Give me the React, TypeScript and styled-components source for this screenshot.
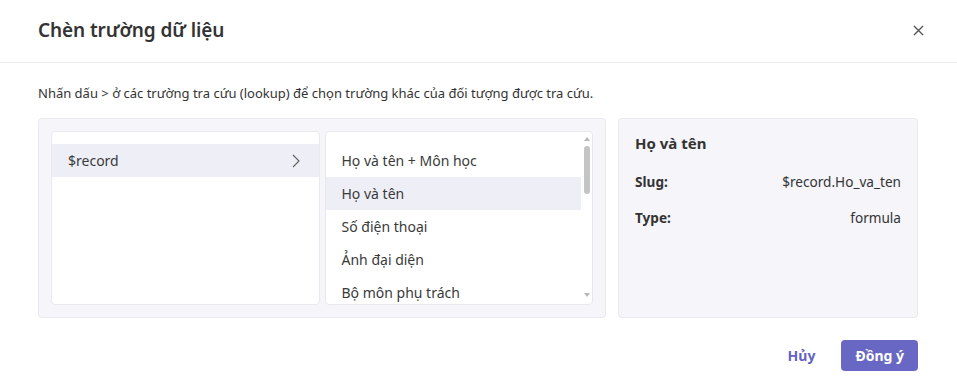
import React from "react";
import styled, { createGlobalStyle } from "styled-components";

const Global = createGlobalStyle`
  html, body { margin: 0; padding: 0; background: #fff; }
  body { font-family: "Noto Sans", "Open Sans", sans-serif; color: #333; }
  * { box-sizing: border-box; }
`;

const Dialog = styled.div`
  width: 957px;
  height: 391px;
  display: flex;
  flex-direction: column;
  background: #fff;
`;

const Header = styled.div`
  height: 63px;
  display: flex;
  align-items: center;
  justify-content: space-between;
  padding: 0 33px 2px 38px;
  border-bottom: 1px solid #ebebf0;
`;

const Title = styled.h2`
  margin: 0;
  font-size: 19px;
  font-weight: 600;
  color: #333;
  letter-spacing: -0.1px;
`;

const CloseButton = styled.button`
  width: 11px;
  height: 11px;
  padding: 0;
  border: none;
  background: none;
  display: flex;
  cursor: pointer;
`;

const Body = styled.div`
  padding: 20px 39px 0 38px;
  display: flex;
  flex-direction: column;
`;

const Hint = styled.p`
  margin: 0 0 15px;
  font-size: 13px;
  line-height: 20px;
  color: #333;
`;

const Panels = styled.div`
  display: flex;
  gap: 12px;
  height: 200px;
`;

const Picker = styled.div`
  width: 568px;
  flex-shrink: 0;
  display: flex;
  gap: 5px;
  padding: 12px;
  background: #f5f5fa;
  border: 1px solid #e9e9f0;
  border-radius: 4px;
`;

const List = styled.div`
  flex: 1;
  display: flex;
  background: #fff;
  border: 1px solid #e8e8ef;
  border-radius: 4px;
  overflow: hidden;
`;

const Items = styled.div`
  flex: 1;
  padding-top: 12px;
  display: flex;
  flex-direction: column;
`;

const Item = styled.div<{ $active?: boolean }>`
  height: 33px;
  flex-shrink: 0;
  display: flex;
  align-items: center;
  justify-content: space-between;
  padding: 0 19px 0 16px;
  font-size: 14px;
  color: #3a3a3a;
  background: ${(p) => (p.$active ? "#eeeff6" : "transparent")};
`;

const Scrollbar = styled.div`
  width: 11px;
  display: flex;
  flex-direction: column;
  align-items: center;
  padding: 2px 0 4px;
`;

const Arrow = styled.div<{ $down?: boolean }>`
  width: 0;
  height: 0;
  border-left: 3.5px solid transparent;
  border-right: 3.5px solid transparent;
  ${(p) =>
    p.$down
      ? "border-top: 4px solid #b8b8b8;"
      : "border-bottom: 4px solid #b8b8b8;"}
  margin: 3px 0;
`;

const Track = styled.div`
  flex: 1;
  width: 100%;
  display: flex;
  justify-content: center;
  padding-top: 2px;
`;

const Thumb = styled.div`
  width: 6px;
  height: 48px;
  border-radius: 3px;
  background: #c4c4c4;
`;

const Detail = styled.div`
  width: 300px;
  flex-shrink: 0;
  background: #f5f5fa;
  border: 1px solid #e9e9f0;
  border-radius: 4px;
  padding: 12px 16px;
  display: flex;
  flex-direction: column;
`;

const DetailTitle = styled.div`
  font-size: 15px;
  font-weight: 700;
  color: #333;
  line-height: 24px;
  margin-bottom: 16px;
`;

const DetailRow = styled.div`
  display: flex;
  justify-content: space-between;
  align-items: center;
  height: 20px;
  margin-bottom: 16px;
  font-size: 13.6px;
  color: #333;
`;

const Label = styled.span`
  font-weight: 700;
`;

const Footer = styled.div`
  display: flex;
  justify-content: flex-end;
  align-items: center;
  gap: 10px;
  padding-top: 22px;
`;

const Button = styled.button<{ $primary?: boolean }>`
  height: 31px;
  padding: 0 ${(p) => (p.$primary ? "14px" : "16px")};
  border: none;
  border-radius: 4px;
  font-family: inherit;
  font-size: 14px;
  font-weight: 700;
  cursor: pointer;
  background: ${(p) => (p.$primary ? "#6868c4" : "transparent")};
  color: ${(p) => (p.$primary ? "#fff" : "#6262c4")};
`;

const Chevron = () => (
  <svg width="8" height="14" viewBox="0 0 8 14" fill="none">
    <path d="M1 1l6 6-6 6" stroke="#666" strokeWidth="1.2" />
  </svg>
);

const CloseIcon = () => (
  <svg width="11" height="11" viewBox="0 0 11 11">
    <path d="M1 1l9 9M10 1l-9 9" stroke="#555" strokeWidth="1.4" />
  </svg>
);

const fields = [
  "Họ và tên + Môn học",
  "Họ và tên",
  "Số điện thoại",
  "Ảnh đại diện",
  "Bộ môn phụ trách",
];

export default function App() {
  return (
    <>
      <Global />
      <Dialog>
        <Header>
          <Title>Chèn trường dữ liệu</Title>
          <CloseButton aria-label="close">
            <CloseIcon />
          </CloseButton>
        </Header>
        <Body>
          <Hint>
            Nhấn dấu &gt; ở các trường tra cứu (lookup) để chọn trường khác của
            đối tượng được tra cứu.
          </Hint>
          <Panels>
            <Picker>
              <List>
                <Items>
                  <Item $active>
                    <span>$record</span>
                    <Chevron />
                  </Item>
                </Items>
              </List>
              <List>
                <Items>
                  {fields.map((f, i) => (
                    <Item key={f} $active={i === 1}>
                      {f}
                    </Item>
                  ))}
                </Items>
                <Scrollbar>
                  <Arrow />
                  <Track>
                    <Thumb />
                  </Track>
                  <Arrow $down />
                </Scrollbar>
              </List>
            </Picker>
            <Detail>
              <DetailTitle>Họ và tên</DetailTitle>
              <DetailRow>
                <Label>Slug:</Label>
                <span>$record.Ho_va_ten</span>
              </DetailRow>
              <DetailRow>
                <Label>Type:</Label>
                <span>formula</span>
              </DetailRow>
            </Detail>
          </Panels>
          <Footer>
            <Button>Hủy</Button>
            <Button $primary>Đồng ý</Button>
          </Footer>
        </Body>
      </Dialog>
    </>
  );
}
